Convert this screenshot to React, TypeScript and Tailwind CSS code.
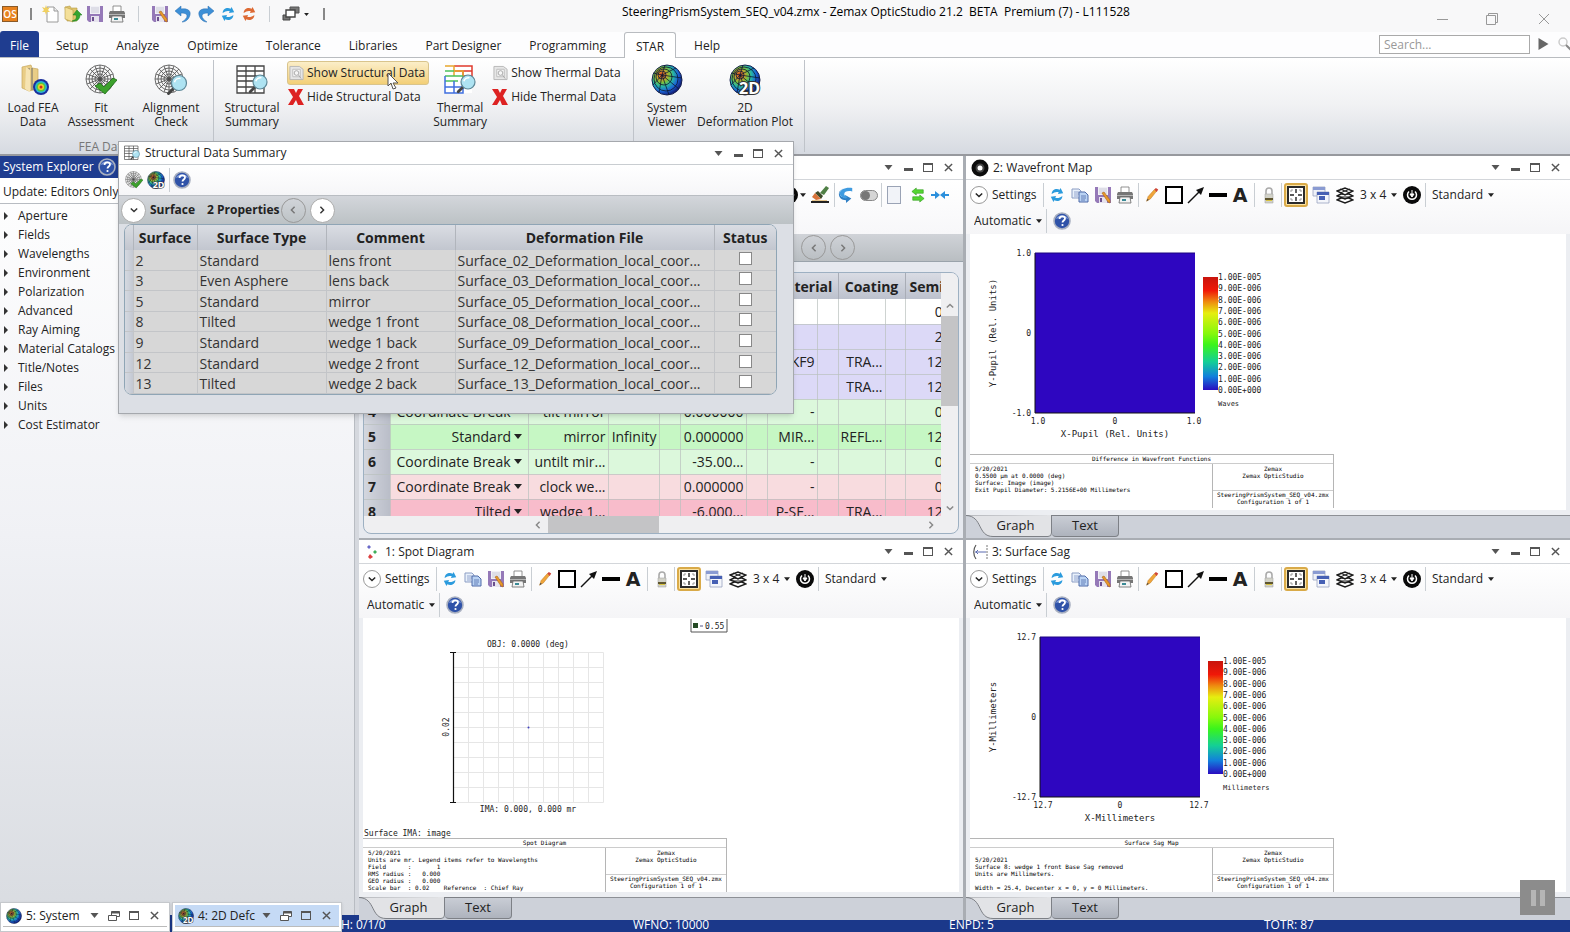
import React from 'react';

type IconProps = { className?: string };

/* ---------- small icons ---------- */

const Caret: React.FC<IconProps> = ({ className = 'w-[7px] h-1' }) => (
  <svg viewBox="0 0 8 5" className={className} fill="currentColor"><path d="M0 0h8L4 5z" /></svg>
);

const NewDocIcon = () => (
  <svg viewBox="0 0 18 18" className="w-[18px] h-[18px]">
    <path d="M5 2h7l4 4v11H5z" fill="#fff" stroke="#9a9a9a" />
    <path d="M12 2v4h4" fill="#eee" stroke="#9a9a9a" />
    <path d="M4 0l1 3 3-1-2 3 2 2-3 0-1 3-1-3-3 0 2-2-2-3 3 1z" fill="#f0d060" />
  </svg>
);

const OpenIcon = () => (
  <svg viewBox="0 0 18 18" className="w-[18px] h-[18px]">
    <path d="M1 2l5-1 1 2h6v13H3z" fill="#dfc56c" stroke="#b79a45" strokeWidth=".6" />
    <path d="M1 2l8 3v12l-8-3z" fill="#f4e09a" stroke="#b79a45" strokeWidth=".6" />
    <path d="M8 16c4-1 5-3 4-6H9l4-5 5 5h-2c0 4-3 7-8 6z" fill="#35a52f" stroke="#1c7a1b" strokeWidth=".5" />
  </svg>
);

const SaveIcon: React.FC<{ edit?: boolean }> = ({ edit }) => (
  <svg viewBox="0 0 18 18" className="w-[18px] h-[18px]">
    <path d="M1 1h16v16H3l-2-2z" fill="#9579b8" />
    <path d="M4 1h10v8H4z" fill="#f1f1f6" />
    <path d="M5 3h8M5 5h8M5 7h8" stroke="#c3c3d2" strokeWidth=".8" />
    <path d="M5 11h8v6H5z" fill="#e6e3ee" />
    <path d="M6 12h2v4H6z" fill="#6b4f8d" />
    {edit && <path d="M8 7l2-1 6 8v3l-2-1z" fill="#e8982a" stroke="#a8631a" strokeWidth=".6" />}
  </svg>
);

const PrintIcon = () => (
  <svg viewBox="0 0 18 18" className="w-[18px] h-[18px]">
    <path d="M5 1h8v6H5z" fill="#fff" stroke="#777" strokeWidth=".8" />
    <path d="M2 6h14l1 2v5H1V8z" fill="#767676" />
    <path d="M1 9h16v1H1z" fill="#b5b5b5" />
    <path d="M4 11h10l1 6H3z" fill="#f3f3f3" stroke="#666" strokeWidth=".8" />
    <path d="M6 13h4v2H6z" fill="#3a8a96" />
  </svg>
);

const UndoIcon: React.FC<IconProps> = ({ className = '' }) => (
  <svg viewBox="0 0 18 18" className={`w-[18px] h-[18px] ${className}`}>
    <path d="M1 6l6-5v3c7-1 10 2 9 6-1 4-4 7-8 7 3-2 5-4 5-6 0-2-2-3-6-3v3z" fill="#3d8fd6" stroke="#2a6fb0" strokeWidth=".5" />
  </svg>
);

const RefreshIcon: React.FC<IconProps> = ({ className = 'text-[#2b9bdd]' }) => (
  <svg viewBox="0 0 18 18" className={`w-4 h-[18px] ${className}`} fill="currentColor">
    <path d="M3 8c0-5 5-7 9-5l1-2 3 6-6 1 1-2c-3-1-5 0-8 2z" />
    <path d="M15 10c0 5-5 7-9 5l-1 2-3-6 6-1-1 2c3 1 5 0 8-2z" />
  </svg>
);

const CascadeIcon = () => (
  <svg viewBox="0 0 18 16" className="w-[18px] h-4">
    <path d="M8 1h9v6H8z" fill="#777" stroke="#555" />
    <path d="M1 9h7v5H1z" fill="#777" stroke="#444" />
    <path d="M4 4h9v7H4z" fill="#fff" stroke="#444" strokeWidth="1.4" />
  </svg>
);

const CopyIcon = () => (
  <svg viewBox="0 0 18 18" className="w-[18px] h-[18px]">
    <path d="M1 3h7l2 2v7H1z" fill="#e8f0fb" stroke="#8b9dc4" />
    <path d="M3 6h5M3 8h5M3 10h4" stroke="#7d93c4" strokeWidth=".8" />
    <path d="M8 6h6l3 3v7H8z" fill="#b9d2f3" stroke="#4e6aa8" />
    <path d="M10 10h5M10 12h5M10 14h4" stroke="#4e6aa8" strokeWidth=".8" />
  </svg>
);

const PencilIcon = () => (
  <svg viewBox="0 0 18 18" className="w-3.5 h-4">
    <path d="M2 17l2-6 8-9 3 2-8 10z" fill="#f0a53a" stroke="#b87822" strokeWidth=".6" />
    <path d="M12 2l2-2 3 2-2 3z" fill="#cf4538" />
    <path d="M2 17l1-3 2 1z" fill="#444" />
  </svg>
);

const ArrowLineIcon = () => (
  <svg viewBox="0 0 18 18" className="w-[18px] h-[18px]">
    <path d="M1 17L12 6" stroke="#111" strokeWidth="1.5" />
    <path d="M17 1l-3 8-5-5z" fill="#111" />
  </svg>
);

const LockIcon = () => (
  <svg viewBox="0 0 12 18" className="w-3 h-[18px]">
    <path d="M3 9V5c0-4 6-4 6 0v4" fill="none" stroke="#aaa" strokeWidth="1.6" />
    <path d="M2 8h8v9H2z" fill="#d2d2c8" stroke="#aaa" strokeWidth=".6" />
    <path d="M2 12h8v2H2z" fill="#5f5630" />
    <path d="M3 14h6v1H3z" fill="#d8c23e" />
  </svg>
);

const FitFrameIcon = () => (
  <svg viewBox="0 0 18 18" className="w-[18px] h-[18px] shrink-0">
    <path d="M1 1h16v16H1z" fill="#fff" stroke="#2a2a2a" strokeWidth="2" />
    <path d="M9 3v4M9 11v4M3 9h4M11 9h4" stroke="#222" strokeWidth="1.4" />
    <path d="M4 6V4h2M12 4h2v2M4 12v2h2M14 12v2h-2" fill="none" stroke="#999" />
  </svg>
);

const WindowsIcon = () => (
  <svg viewBox="0 0 18 18" className="w-[18px] h-[18px]">
    <path d="M1 1h12v9H1z" fill="#eef1f8" stroke="#9aa3c0" strokeWidth=".8" />
    <path d="M1 1h12v3H1z" fill="#8a9bd2" />
    <path d="M5 6h12v11H5z" fill="#f4f6fb" stroke="#9aa3c0" strokeWidth=".8" />
    <path d="M5 6h12v3H5zM7 10h6v4H7z" fill="#4660b4" />
  </svg>
);

const LayersIcon = () => (
  <svg viewBox="0 0 18 18" className="w-[18px] h-[18px]" fill="#fff" stroke="#1a1a1a" strokeWidth="1.4">
    <path d="M1 14l4-2h8l4 2-8 3z" />
    <path d="M1 10l4-2h8l4 2-8 3z" />
    <path d="M1 5l8-3 8 3-8 4z" />
    <path d="M4 7l10-4M4 3l10 4M4 11h10" strokeWidth="1" />
  </svg>
);

const TargetIcon = () => (
  <svg viewBox="0 0 18 18" className="w-[18px] h-[18px]">
    <circle cx="9" cy="9" r="9" fill="#0a0a0a" />
    <path d="M6 5.500a4.500 4.500 0 1 0 6 0" fill="none" stroke="#fff" strokeWidth="1.500" />
    <path d="M9 4v5M7 8l2 3 2-3z" stroke="#fff" fill="#fff" />
  </svg>
);

const HelpIcon = () => (
  <svg viewBox="0 0 18 18" className="w-[18px] h-[18px]">
    <circle cx="9" cy="9" r="8" fill="#2f52a8" stroke="#a9b0c0" strokeWidth="1.6" />
    <path d="M3 7c1-5 11-5 12 0-4-2-8-2-12 0z" fill="#7f9ad8" />
    <path d="M6.500 7c0-3.500 5.500-3.500 5.500-.5 0 2-2.500 2-2.500 4" fill="none" stroke="#fff" strokeWidth="1.8" />
    <circle cx="9.500" cy="13" r="1.100" fill="#fff" />
  </svg>
);

const Magnifier: React.FC<{ x: number; y: number; r: number }> = ({ x, y, r }) => (
  <g>
    <path d={`M${x - r * 0.6} ${y + r * 0.6}l${-r * 0.8} ${r * 0.8}`} stroke="#444" strokeWidth={r * 0.4} strokeLinecap="round" />
    <circle cx={x} cy={y} r={r} fill="#aee3f2" stroke="#5d8797" strokeWidth="1.2" />
    <path d={`M${x - r * 0.6} ${y - r * 0.1}a${r * 0.7} ${r * 0.7} 0 0 1 ${r * 0.8} ${-r * 0.5}`} fill="none" stroke="#fff" strokeWidth="1.500" />
  </g>
);

const WebRings = () => (
  <g fill="#f7f7f7" stroke="#4a4a4a" strokeWidth=".8">
    <circle cx="15" cy="15" r="14" />
    <circle cx="15" cy="15" r="11" />
    <circle cx="15" cy="15" r="8" />
    <circle cx="15" cy="15" r="5" />
    <circle cx="15" cy="15" r="2" />
    <path d="M15 1v28M1 15h28M5 5l20 20M25 5L5 25M10 2l10 26M20 2L10 28M2 10l26 10M2 20l26-10" />
  </g>
);

const LoadFeaIcon = () => (
  <svg viewBox="0 0 32 32" className="w-8 h-8">
    <path d="M5 3l9-2 1 3 6 1v20l-9 2-7-3z" fill="#e9cd86" stroke="#c7a75c" strokeWidth=".7" />
    <path d="M12 4v23M15 4v22" stroke="#6a6a6a" strokeWidth="1" />
    <path d="M9 3l4 3v22l-5-3z" fill="#f6e4b3" />
    <circle cx="24" cy="23" r="8" fill="#1b2f9c" />
    <circle cx="24" cy="23" r="6" fill="#28b5d8" />
    <circle cx="24" cy="23" r="4.500" fill="#59c83c" />
    <circle cx="24" cy="23" r="3" fill="#f0d02c" />
    <circle cx="24" cy="23" r="1.500" fill="#d42a1c" />
  </svg>
);

const FitIcon: React.FC<IconProps> = ({ className = 'w-8 h-8' }) => (
  <svg viewBox="0 0 32 32" className={className}>
    <WebRings />
    <path d="M10 22l5-3 4 4 9-9 4 2-12 14z" fill="#3ca12c" stroke="#1e6a17" strokeWidth=".8" />
  </svg>
);

const AlignIcon = () => (
  <svg viewBox="0 0 34 32" className="w-[34px] h-8">
    <WebRings />
    <Magnifier x={25} y={19} r={7.5} />
  </svg>
);

const GridLens: React.FC<{ thermal?: boolean; className?: string }> = ({ thermal, className = 'w-8 h-8' }) => (
  <svg viewBox="0 0 32 32" className={className}>
    <path d="M1 2h27v27H1z" fill="#fff" />
    {thermal ? (
      <g fill="none" strokeWidth="1.500">
        <path d="M10 2h18v5H10M19 7v5h9V2" stroke="#e03a2c" />
        <path d="M1 2h9v10M10 7h9v10" stroke="#e8a72e" />
        <path d="M1 7h9M1 12h18M1 17h13" stroke="#4cc05c" />
        <path d="M1 12v17h18V17M1 23h18M10 17v12" stroke="#3f6fe0" />
      </g>
    ) : (
      <path d="M1 2h27v27H1zM1 7h27M1 12h27M1 17h27M1 23h27M10 2v27M19 2v27" fill="none" stroke="#444" strokeWidth="1.300" />
    )}
    <Magnifier x={24} y={18} r={7} />
  </svg>
);

const SheetIcon = () => (
  <svg viewBox="0 0 16 16" className="w-[15px] h-4">
    <path d="M1 1h10l4 3v11H1z" fill="#e6e6e6" stroke="#b5b5b5" />
    <path d="M4 4h8v8H4z" fill="#f6f6f6" stroke="#bdbdbd" />
    <circle cx="8" cy="8" r="2.500" fill="none" stroke="#a5a5a5" />
    <path d="M10 10l3 4" stroke="#a5a5a5" />
  </svg>
);

const RedX = () => (
  <svg viewBox="0 0 16 16" className="w-4 h-4">
    <path d="M0 0h6l2 4 2-4h5l-4 7 5 9h-6l-2-5-3 5H0l5-8z" fill="#dd2222" />
  </svg>
);

const GlobeIcon: React.FC<{ two?: boolean; className?: string }> = ({ two, className = 'w-8 h-8' }) => (
  <svg viewBox="0 0 32 32" className={className}>
    <defs>
      <radialGradient id="globe" cx=".33" cy=".33" r=".7">
        <stop offset="0" stopColor="#c0301a" />
        <stop offset=".18" stopColor="#e0912a" />
        <stop offset=".36" stopColor="#7fc03a" />
        <stop offset=".55" stopColor="#25b5a6" />
        <stop offset=".78" stopColor="#1b63d6" />
        <stop offset="1" stopColor="#12207c" />
      </radialGradient>
    </defs>
    <circle cx="16" cy="16" r="15" fill="url(#globe)" stroke="#16204e" />
    <g fill="none" stroke="#0d1b33" strokeWidth=".8">
      <circle cx="11" cy="11" r="4" />
      <circle cx="13" cy="13" r="8" />
      <circle cx="15" cy="15" r="12" />
      <path d="M11 11L2 21M11 11L8 29M11 11l7 20M11 11l17 14M11 11l20 3M11 11l14-7M11 11l3-10M11 11L2 9" />
    </g>
    {two && (
      <text x="31" y="30" textAnchor="end" fontSize="16" fontWeight="700" fill="#fff" stroke="#333" strokeWidth="2" paintOrder="stroke">2D</text>
    )}
  </svg>
);

const RingIcon = () => (
  <svg viewBox="0 0 18 18" className="w-[18px] h-[18px]">
    <circle cx="9" cy="9" r="8.500" fill="#0c0c0c" />
    <circle cx="9" cy="9" r="4.500" fill="#444" />
    <circle cx="9" cy="9" r="2.500" fill="#fff" />
  </svg>
);

const DotsIcon = () => (
  <svg viewBox="0 0 17 16" className="w-[17px] h-4">
    <path d="M5 1l2 2-2 2-2-2z" fill="#6a6ac8" />
    <path d="M11 6l2 2-2 2-2-2z" fill="#3fae5a" />
    <path d="M6 10l3 3-3 2-2-2z" fill="#dc4040" />
  </svg>
);

const SagIcon = () => (
  <svg viewBox="0 0 17 16" className="w-[17px] h-4" fill="none">
    <path d="M5 1C2 5 2 11 5 15" stroke="#555" strokeWidth="1.200" />
    <path d="M4 8h11M7 6L5 8l2 2" stroke="#5a6ab0" />
    <path d="M16 1v14" stroke="#777" strokeDasharray="2 1" />
  </svg>
);

/* ---------- shared controls ---------- */

const Sep: React.FC<IconProps> = ({ className = 'mx-[2px]' }) => (
  <span className={`w-px h-6 shrink-0 bg-[#c9ced3] ${className}`} />
);

const Drop: React.FC<{ label: string; value: string; className?: string; caret?: string }> = ({ label, value, className = '', caret = 'w-[6px] h-1' }) => (
  <span className={`relative inline-flex items-center ${className}`}>
    <select aria-label={label} className="appearance-none bg-transparent pr-2.5 outline-none">
      <option>{value}</option>
    </select>
    <Caret className={`absolute right-0 pointer-events-none ${caret}`} />
  </span>
);

const Tool: React.FC<{ label: string; className?: string; children: React.ReactNode }> = ({ label, className = 'w-[22px]', children }) => (
  <button aria-label={label} className={`h-6 shrink-0 flex items-center justify-center ${className}`}>{children}</button>
);

const WindowButtons: React.FC<{ stacked?: boolean }> = ({ stacked }) => (
  <div className="flex shrink-0 text-[#555]">
    <Tool label="Menu" className="w-5"><Caret className="w-[9px] h-[5px]" /></Tool>
    <Tool label={stacked ? 'Restore' : 'Minimize'} className="w-5">
      {stacked ? (
        <svg viewBox="0 0 12 10" className="w-3 h-2.5" fill="#fff" stroke="currentColor"><path d="M3.500.5h8v5h-8z" /><path d="M.5 4.500h8v5h-8z" /><path d="M3.500 1.500h8" strokeWidth="2" /></svg>
      ) : (
        <span className="w-[9px] h-[3px] mt-1 bg-[#555]" />
      )}
    </Tool>
    <Tool label="Maximize" className="w-5"><span className="w-2.5 h-[9px] border border-t-2 border-[#555]" /></Tool>
    <Tool label="Close" className="w-5">
      <svg viewBox="0 0 10 10" className="w-[9px] h-[9px]" stroke="currentColor" strokeWidth="1.600"><path d="M1 1l8 8M9 1L1 9" /></svg>
    </Tool>
  </div>
);

const Chevron: React.FC<{ dir: 'left' | 'right' | 'down' | 'up'; className?: string }> = ({ dir, className = 'w-2 h-2' }) => {
  const d = { left: 'M7 1L3 5l4 4', right: 'M3 1l4 4-4 4', down: 'M1 3l4 4 4-4', up: 'M1 7l4-4 4 4' }[dir];
  return <svg viewBox="0 0 10 10" className={className} fill="none" stroke="currentColor" strokeWidth="1.800"><path d={d} /></svg>;
};

/* ---------- ribbon ---------- */

const TitleBar = () => (
  <header className="h-8 pt-[3px] flex items-start bg-[#f8f8f9]">
    <div className="flex items-center h-[22px] pl-[2px]">
      <span className="w-4 h-4 flex items-center justify-center bg-[#e8821e] border border-[#8a5a28] text-white text-[10px] font-semibold">OS</span>
      <span className="w-0.5 h-3 ml-3 bg-[#888]" />
      <div className="flex gap-1 ml-2.5"><NewDocIcon /><OpenIcon /><SaveIcon /><PrintIcon /></div>
      <Sep className="mx-3 !h-4" />
      <div className="flex gap-[5px]">
        <SaveIcon edit />
        <UndoIcon />
        <UndoIcon className="-scale-x-100" />
        <RefreshIcon />
        <RefreshIcon className="text-[#dd6a34]" />
      </div>
      <Sep className="mx-3 !h-4" />
      <CascadeIcon />
      <Caret className="w-[5px] h-[3px] ml-1" />
      <span className="w-0.5 h-3 ml-3.5 bg-[#888]" />
    </div>
    <div className="flex-1 pl-2.5 text-center text-[12px] leading-[18px] text-black whitespace-pre">
      SteeringPrismSystem_SEQ_v04.zmx - Zemax OpticStudio 21.2  BETA  Premium (7) - L111528
    </div>
    <div className="flex pt-1 text-[#999]">
      <Tool label="Minimize window" className="w-[50px]"><span className="w-[11px] h-px bg-[#999]" /></Tool>
      <Tool label="Restore window" className="w-[50px]">
        <svg viewBox="0 0 12 12" className="w-3 h-3" fill="none" stroke="currentColor"><path d="M.5 2.500h9v9h-9zM2.500 2.500v-2h9v9h-2" /></svg>
      </Tool>
      <Tool label="Close window" className="w-[53px]">
        <svg viewBox="0 0 12 12" className="w-3 h-3" stroke="currentColor"><path d="M1 1l10 10M11 1L1 11" /></svg>
      </Tool>
    </div>
  </header>
);

const tabs = ['Setup', 'Analyze', 'Optimize', 'Tolerance', 'Libraries', 'Part Designer', 'Programming', 'STAR', 'Help'];

const RibbonTabs = () => (
  <nav className="h-[26px] flex items-end border-b border-[#b9bcc0] bg-[#fdfdfe] text-[12px]">
    <button className="h-[26px] w-[39px] pt-[3px] bg-[#1f3d90] text-white rounded-t-[3px]">File</button>
    <div className="flex pl-[3px]">
      {tabs.map((tab) => (
        <button
          key={tab}
          className={tab === 'STAR'
            ? 'h-[26px] -mb-px mx-1 px-[11px] pt-0.5 bg-white border border-b-0 border-[#b9bcc0] rounded-t-[3px]'
            : 'h-[25px] px-3.5 pt-[3px]'}
        >
          {tab}
        </button>
      ))}
    </div>
    <div className="ml-auto flex items-center h-[26px] gap-2">
      <input type="text" aria-label="Search" placeholder="Search..." className="w-[151px] h-[19px] px-1 bg-white border border-[#aaa] text-[12px] placeholder:text-[#999] outline-none" />
      <button aria-label="Go" className="w-3"><svg viewBox="0 0 10 12" className="w-[11px] h-3" fill="#666"><path d="M0 0l10 6-10 6z" /></svg></button>
      <button aria-label="Find" className="w-3"><svg viewBox="0 0 14 14" className="w-3.5 h-3.5" fill="none"><circle cx="5" cy="5" r="4" stroke="#ccc" strokeWidth="1.500" /><path d="M8 8l5 5" stroke="#888" strokeWidth="2" /></svg></button>
    </div>
  </nav>
);

const BigButton: React.FC<{ icon: React.ReactNode; lines: [string, string]; className: string }> = ({ icon, lines, className }) => (
  <button className={`flex flex-col items-center shrink-0 pt-1.5 h-[82px] text-[12px] leading-[14px] whitespace-nowrap ${className}`}>
    {icon}
    <span className="mt-[5px]">{lines[0]}</span>
    <span>{lines[1]}</span>
  </button>
);

const ShowHide: React.FC<{ kind: string; active?: boolean }> = ({ kind, active }) => (
  <div className="flex flex-col items-start pt-[3px] text-[12px] whitespace-nowrap">
    <button className={`h-6 pl-px pr-[3px] flex items-center gap-[3px] border rounded-[3px] ${active ? 'bg-linear-to-b from-[#fbeec8] to-[#f3cf76] border-[#d9c48c]' : 'border-transparent'}`}>
      <SheetIcon />Show {kind} Data
    </button>
    <button className="h-6 pl-px flex items-center gap-[3px]"><RedX />Hide {kind} Data</button>
  </div>
);

const Ribbon = () => (
  <section className="h-[98px] flex bg-linear-to-b from-white via-[#f0f1f3] to-[#d6dae1] border-b-2 border-[#97999e]">
    <div className="w-[214px] my-0.5 flex flex-col border-r border-[#bfc3c9]">
      <div className="flex -mt-0.5">
        <BigButton icon={<LoadFeaIcon />} lines={['Load FEA', 'Data']} className="w-[66px]" />
        <BigButton icon={<FitIcon />} lines={['Fit', 'Assessment']} className="w-[70px]" />
        <BigButton icon={<AlignIcon />} lines={['Alignment', 'Check']} className="w-[70px]" />
      </div>
      <div className="pr-1.5 text-center text-[12px] leading-[14px] text-[#777]">FEA Data</div>
    </div>
    <div className="w-[420px] my-0.5 flex border-r border-[#bfc3c9]">
      <div className="flex -mt-0.5 pl-[3px]">
        <BigButton icon={<GridLens />} lines={['Structural', 'Summary']} className="w-[70px]" />
        <ShowHide kind="Structural" active />
        <BigButton icon={<GridLens thermal />} lines={['Thermal', 'Summary']} className="w-[62px]" />
        <ShowHide kind="Thermal" />
      </div>
    </div>
    <div className="w-[171px] my-0.5 flex border-r border-[#bfc3c9]">
      <div className="flex -mt-0.5 pl-px">
        <BigButton icon={<GlobeIcon />} lines={['System', 'Viewer']} className="w-[64px]" />
        <BigButton icon={<GlobeIcon two />} lines={['2D', 'Deformation Plot']} className="w-[92px]" />
      </div>
    </div>
  </section>
);

/* ---------- system explorer ---------- */

const explorerItems = [
  'Aperture', 'Fields', 'Wavelengths', 'Environment', 'Polarization', 'Advanced',
  'Ray Aiming', 'Material Catalogs', 'Title/Notes', 'Files', 'Units', 'Cost Estimator',
];

const SystemExplorer = () => (
  <aside className="w-[355px] shrink-0 flex flex-col text-[12px] bg-linear-to-b from-white via-[#f0f1f5] to-[#d9dce1] border-r border-[#b8bcc2]">
    <div className="h-[22px] pl-[3px] flex items-center gap-1 bg-[#1f3d90] text-white">
      System Explorer <HelpIcon />
    </div>
    <div className="h-[26px] pt-0.5 pl-[3px] flex items-center bg-white border-b border-[#b8bcc2]">Update: Editors Only</div>
    <ul className="pt-0.5">
      {explorerItems.map((item) => (
        <li key={item}>
          <button className="h-[19px] pl-1 flex items-center gap-2.5">
            <svg viewBox="0 0 4 8" className="w-1 h-2" fill="#333"><path d="M0 0l4 4-4 4z" /></svg>
            {item}
          </button>
        </li>
      ))}
    </ul>
  </aside>
);

/* ---------- analysis windows ---------- */

const PanelTitle: React.FC<{ icon?: React.ReactNode; title?: string }> = ({ icon, title }) => (
  <div className="h-6 shrink-0 px-[5px] flex items-center gap-1 bg-white border-b border-[#d3d6da] text-[12px]">
    {icon}
    <span className="flex-1">{title}</span>
    <WindowButtons />
  </div>
);

const GraphToolbar = () => (
  <div className="shrink-0 h-[54px] pt-0.5 pl-1 bg-linear-to-b from-white to-[#f5f5f7] text-[12px]">
    <div className="flex items-center h-[26px]">
      <button className="w-[73px] shrink-0 flex items-center gap-1">
        <span className="w-[18px] h-[18px] flex items-center justify-center rounded-full border border-[#999] bg-white"><Chevron dir="down" /></span>
        Settings
      </button>
      <Sep className="mr-[2px]" />
      <Tool label="Refresh"><RefreshIcon /></Tool>
      <Tool label="Copy" className="w-[23px]"><CopyIcon /></Tool>
      <Tool label="Save" className="w-[23px]"><SaveIcon edit /></Tool>
      <Tool label="Print"><PrintIcon /></Tool>
      <Sep />
      <Tool label="Pencil"><PencilIcon /></Tool>
      <Tool label="Rectangle"><span className="w-[18px] h-[18px] border-2 border-black bg-white" /></Tool>
      <Tool label="Arrow"><ArrowLineIcon /></Tool>
      <Tool label="Line"><span className="w-[18px] h-1 bg-black" /></Tool>
      <Tool label="Annotate">
        <span className="font-['DejaVu_Sans'] text-[19px] leading-none font-bold">A</span>
      </Tool>
      <Sep className="mx-[3px]" />
      <Tool label="Lock"><LockIcon /></Tool>
      <Sep className="ml-px mr-[2px]" />
      <Tool label="Fit window" className="w-6 rounded-[3px] border-2 border-[#d9aa48] bg-[#fbe3a4]"><FitFrameIcon /></Tool>
      <Tool label="Cascade" className="w-[26px]"><WindowsIcon /></Tool>
      <Tool label="Layers"><LayersIcon /></Tool>
      <Drop label="Grid size" value="3 x 4" className="ml-1 mr-1" />
      <Tool label="Reset"><TargetIcon /></Tool>
      <Sep className="ml-[2px] mr-1.5" />
      <Drop label="Style" value="Standard" />
    </div>
    <div className="flex items-center h-[26px] pl-1">
      <Drop label="Mode" value="Automatic" />
      <Sep className="ml-1 mr-1" />
      <Tool label="Help"><HelpIcon /></Tool>
    </div>
  </div>
);

const PanelTabs = () => (
  <div className="h-[23px] shrink-0 flex items-start bg-[#cdd1d9] border-t border-[#8d9096] text-[13px]">
    <button className="relative w-[86px] h-[22px] -mt-px pl-[13px]">
      <svg viewBox="0 0 86 22" className="absolute inset-0 w-[86px] h-[22px]">
        <path d="M0 .5C17 1 11 21.500 27 21.500H82q3.500 0 3.500-3.500V0" fill="#e2e3e6" stroke="#7d8086" />
      </svg>
      <span className="relative">Graph</span>
    </button>
    <button className="w-[67px] h-[22px] -mt-px bg-linear-to-b from-[#c9cdd5] to-[#aeb3bd] border border-l-0 border-[#7d8086] rounded-b-[4px]">Text</button>
  </div>
);

const Footer: React.FC<{ title: string; lines: string }> = ({ title, lines }) => (
  <div className="w-[364px] h-[54px] flex flex-col border-t border-r border-[#b5b5b5] font-['DejaVu_Sans_Mono'] text-[6px] leading-[7px] text-black">
    <div className="h-[9px] text-center border-b border-[#ccc]">{title}</div>
    <div className="flex-1 flex">
      <pre className="flex-1 pt-px pl-[5px] font-['DejaVu_Sans_Mono'] leading-[7px]">{lines}</pre>
      <div className="w-[121px] shrink-0 flex flex-col border-l border-[#b5b5b5] text-center">
        <div className="h-[27px] pt-px border-b border-[#ccc]">Zemax<br />Zemax OpticStudio</div>
        <div>SteeringPrismSystem_SEQ_v04.zmx<br />Configuration 1 of 1</div>
      </div>
    </div>
  </div>
);

const GraphPanel: React.FC<{ icon: React.ReactNode; title: string; children: React.ReactNode }> = ({ icon, title, children }) => (
  <section className="min-h-0 min-w-0 flex flex-col bg-[#eceef2]">
    <PanelTitle icon={icon} title={title} />
    <GraphToolbar />
    <div className="flex-1 min-h-0 mx-1 mb-[5px] flex flex-col bg-white">{children}</div>
    <PanelTabs />
  </section>
);

const scale = ['1.00E-005', '9.00E-006', '8.00E-006', '7.00E-006', '6.00E-006', '5.00E-006', '4.00E-006', '3.00E-006', '2.00E-006', '1.00E-006', '0.00E+000'];

const FalseColorPlot: React.FC<{ id: string; left: number; max: string; axis: [string, string]; unit: string }> = ({ id, left, max, axis, unit }) => (
  <svg width="400" height="220" viewBox="0 0 400 220" className="shrink-0 font-['DejaVu_Sans_Mono']" fontSize="8" fill="#222">
    <defs>
      <linearGradient id={id} x1="0" y1="0" x2="0" y2="1">
        <stop offset="0" stopColor="#c8140c" />
        <stop offset=".12" stopColor="#f01808" />
        <stop offset=".22" stopColor="#ee8c10" />
        <stop offset=".32" stopColor="#e6ee10" />
        <stop offset=".5" stopColor="#86f80c" />
        <stop offset=".6" stopColor="#3af41c" />
        <stop offset=".75" stopColor="#14cf96" />
        <stop offset=".88" stopColor="#1280dc" />
        <stop offset="1" stopColor="#2a0cc0" />
      </linearGradient>
    </defs>
    <rect x={left} y="19" width="160" height="160" fill="#2e06c0" />
    <path d={`M${left} 19v160h160`} fill="none" stroke="#111" />
    <path d={`M${left} 19h160`} stroke="#1c0480" />
    <text x={left - 4} y="22" textAnchor="end">{max}</text>
    <text x={left - 4} y="102" textAnchor="end">0</text>
    <text x={left - 4} y="182" textAnchor="end">-{max}</text>
    <text x={left + 3} y="190" textAnchor="middle">{max}</text>
    <text x={left + 80} y="190" textAnchor="middle">0</text>
    <text x={left + 159} y="190" textAnchor="middle">{max}</text>
    <text x={left + 80} y="203" textAnchor="middle" fontSize="9">{axis[0]}</text>
    <text x="24" y="99" textAnchor="middle" fontSize="9" transform="rotate(-90 24 99)" dy="2">{axis[1]}</text>
    <rect x={left + 168} y="43" width="15" height="113" fill={`url(#${id})`} />
    {scale.map((s, i) => <text key={s} x={left + 183} y={46 + i * 11.3}>{s}</text>)}
    <text x={left + 183} y="172" fontSize="7">{unit}</text>
  </svg>
);

const SpotPlot = () => {
  const steps = Array.from({ length: 11 }, (_, i) => i * 15);
  return (
    <svg width="400" height="220" viewBox="0 0 400 220" className="shrink-0 font-['DejaVu_Sans_Mono']" fontSize="8" fill="#222">
      <path d="M328 14V1M328 14h36V1" fill="none" stroke="#555" />
      <rect x="330" y="5" width="5" height="5" fill="#244a24" />
      <path d="M337 8h3" stroke="#558" />
      <text x="342" y="11">0.55</text>
      <text x="165" y="29" textAnchor="middle">OBJ: 0.0000 (deg)</text>
      <g stroke="#e6e6e6">
        {steps.map((s) => <path key={s} d={`M${90.5 + s} 34.5v150M90.5 ${34.5 + s}h150`} />)}
      </g>
      <path d="M87 34.500h6M90.500 34v150M87 184.500h6" stroke="#111" strokeWidth="1.200" fill="none" />
      <text x="86" y="109" textAnchor="middle" transform="rotate(-90 86 109)">0.02</text>
      <circle cx="165.500" cy="109.500" r="1" fill="#4040c0" />
      <text x="165" y="194" textAnchor="middle">IMA: 0.000, 0.000 mr</text>
      <text x="1" y="218">Surface IMA: image</text>
    </svg>
  );
};

/* ---------- lens data editor ---------- */

const lensRows = [
  { n: '0', tone: 'bg-white', type: 'Standard', comment: '', radius: 'Infinity', thick: 'Infinity', mat: '', coat: '', sem: '0.000000' },
  { n: '1', tone: 'bg-[#dcd9f7]', type: 'Standard', comment: '', radius: 'Infinity', thick: '50.00...', mat: '', coat: '', sem: '2.000000' },
  { n: '2', tone: 'bg-[#dcd9f7]', type: 'Standard', comment: 'lens front', radius: '', thick: '4.000...', mat: 'N-KF9', coat: 'TRA...', sem: '12.700000' },
  { n: '3', tone: 'bg-[#dcd9f7]', type: 'Even Asphere', comment: 'lens back', radius: '', thick: '35.00...', mat: '', coat: 'TRA...', sem: '12.700000' },
  { n: '4', tone: 'bg-[#dcf8dc]', type: 'Coordinate Break', comment: 'tilt mirror', radius: '', thick: '0.000000', mat: '-', coat: '', sem: '0.000000' },
  { n: '5', tone: 'bg-[#c6f7c4]', type: 'Standard', comment: 'mirror', radius: 'Infinity', thick: '0.000000', mat: 'MIR...', coat: 'REFL...', sem: '12.700000' },
  { n: '6', tone: 'bg-[#dcf8dc]', type: 'Coordinate Break', comment: 'untilt mir...', radius: '', thick: '-35.00...', mat: '-', coat: '', sem: '0.000000' },
  { n: '7', tone: 'bg-[#f8dcdf]', type: 'Coordinate Break', comment: 'clock we...', radius: '', thick: '0.000000', mat: '-', coat: '', sem: '0.000000' },
  { n: '8', tone: 'bg-[#f8bccb]', type: 'Tilted', comment: 'wedge 1...', radius: '', thick: '-6.000...', mat: 'P-SF...', coat: 'TRA...', sem: '12.700000' },
];

const LensDataEditor = () => (
  <section className="min-h-0 min-w-0 flex flex-col bg-[#e6e9ef]">
    <PanelTitle />
    <div className="h-[54px] shrink-0 pt-[3px] pr-3 flex justify-end items-start bg-linear-to-b from-white to-[#f7f7f9]">
      <Tool label="Target"><TargetIcon /></Tool>
      <Caret className="w-1.5 h-1 mt-2.5" />
      <Tool label="Paint" className="w-7">
        <svg viewBox="0 0 18 18" className="w-[18px] h-[18px]">
          <path d="M9 7l6-7 3 2-5 7z" fill="#4f7f45" />
          <path d="M4 7l3-2 5 5-2 3z" fill="#3c4a2a" />
          <path d="M1 11l3-4 6 6-5 1z" fill="#d8733a" />
          <path d="M0 15h18v2H0z" fill="#222" />
          <path d="M1 14h15v1H1z" fill="#e6c58c" />
        </svg>
      </Tool>
      <Sep className="mx-0" />
      <Tool label="Rotate">
        <svg viewBox="0 0 18 18" className="w-4 h-[18px]">
          <path d="M16 1C7-1 1 3 2 8c1 3 3 4 6 4v-3l7 4-6 5v-3C4 15 1 12 1 8 1 3 7-1 16 1z" fill="#2f7fc4" />
          <path d="M16 1v4c-5-1-9 0-9 3 0 2 2 3 4 3l-2 2C5 12 2 10 2 7c0-4 6-7 14-6z" fill="#3f9be0" />
        </svg>
      </Tool>
      <Tool label="Toggle" className="w-6"><span className="w-[18px] h-[11px] flex rounded-full bg-[#d5d5d5] border border-[#888]"><span className="w-[9px] h-[9px] rounded-full bg-[#777]" /></span></Tool>
      <Sep className="mx-0" />
      <Tool label="Notes" className="w-6"><span className="w-3.5 h-[18px] bg-[#f1f3f8] border border-[#9aa3b5]" /></Tool>
      <Tool label="Swap" className="w-[23px]">
        <svg viewBox="0 0 16 18" className="w-3.5 h-4" fill="#55d632" stroke="#2f9c1c" strokeWidth=".7"><path d="M1 5l5-4v2h8v4H6v2zM15 13l-5-4v2H2v4h8v2z" /></svg>
      </Tool>
      <Tool label="Width">
        <svg viewBox="0 0 18 10" className="w-[18px] h-2.5" fill="#2b8fdc"><path d="M0 4h4V1l5 4-5 4V6H0zM18 4h-4V1L9 5l5 4V6h4z" /></svg>
      </Tool>
    </div>
    <div className="h-7 shrink-0 flex items-center justify-end pr-[108px] gap-1 bg-linear-to-b from-[#d0d3d8] to-[#b9bec2] border-b border-[#9aa3ab] text-[#777]">
      <button aria-label="Previous" className="w-[25px] h-[25px] flex items-center justify-center rounded-full border border-[#999]"><Chevron dir="left" /></button>
      <button aria-label="Next" className="w-[25px] h-[25px] flex items-center justify-center rounded-full border border-[#999]"><Chevron dir="right" /></button>
    </div>
    <div className="flex-1 min-h-0 mt-[10px] mx-1 mb-1 flex flex-col border border-[#9db0c2] rounded-[8px] bg-[#efeff1] overflow-hidden">
      <div className="flex-1 min-h-0 flex">
        <div className="flex-1 min-w-0 overflow-hidden text-[14px]">
          <table className="w-[633px] table-fixed border-collapse">
            <colgroup>
              <col className="w-[26px]" /><col className="w-[138px]" /><col className="w-[80px]" /><col className="w-[51px]" />
              <col className="w-[21px]" /><col className="w-[66px]" /><col className="w-[21px]" /><col className="w-[50px]" />
              <col className="w-[21px]" /><col className="w-[47px]" /><col className="w-[20px]" /><col className="w-[92px]" />
            </colgroup>
            <thead>
              <tr className="h-[26px] bg-linear-to-b from-[#d9dce4] to-[#bcc1cd] *:border-r *:border-[#a9adb6] *:pt-px *:px-0 *:pb-0 *:whitespace-nowrap">
                <th></th>
                <th>Surface Type</th>
                <th>Comment</th>
                <th colSpan={2}>Radius</th>
                <th colSpan={2}>Thickness</th>
                <th colSpan={2}>Material</th>
                <th colSpan={2}>Coating</th>
                <th className="text-left !pl-1">Semi-Diameter</th>
              </tr>
            </thead>
            <tbody>
              {lensRows.map((r) => (
                <tr key={r.n} className={`h-[25px] text-right *:border-r *:border-b *:border-[#b9c0bd]/70 *:py-0 *:px-0.5 *:whitespace-nowrap ${r.tone}`}>
                  <th className="bg-linear-to-r from-[#d3d6de] to-[#b9bdc8] text-left !pl-1">{r.n}</th>
                  <td><Drop label={`Surface ${r.n} type`} value={r.type} className="mr-1" caret="w-2 h-[5px]" /></td>
                  <td>{r.comment}</td>
                  <td>{r.radius}</td>
                  <td></td>
                  <td>{r.thick}</td>
                  <td></td>
                  <td>{r.mat}</td>
                  <td></td>
                  <td>{r.coat}</td>
                  <td></td>
                  <td>{r.sem}</td>
                </tr>
              ))}
            </tbody>
          </table>
        </div>
        <div className="w-[17px] shrink-0 flex flex-col items-center bg-[#efeff1] text-[#888]">
          <span className="h-[43px] flex items-end pb-1.5"><Chevron dir="up" /></span>
          <span className="w-full h-[90px] bg-[#c4c4c6]" />
          <span className="mt-auto pb-1"><Chevron dir="down" /></span>
        </div>
      </div>
      <div className="h-[17px] shrink-0 flex items-center pl-[170px] pr-[23px] text-[#888]">
        <Chevron dir="left" />
        <span className="w-[111px] h-[17px] ml-1.5 bg-[#c4c4c6]" />
        <span className="ml-auto"><Chevron dir="right" /></span>
      </div>
    </div>
  </section>
);

/* ---------- structural data summary ---------- */

const summaryRows = [
  ['2', 'Standard', 'lens front', 'Surface_02_Deformation_local_coor...'],
  ['3', 'Even Asphere', 'lens back', 'Surface_03_Deformation_local_coor...'],
  ['5', 'Standard', 'mirror', 'Surface_05_Deformation_local_coor...'],
  ['8', 'Tilted', 'wedge 1 front', 'Surface_08_Deformation_local_coor...'],
  ['9', 'Standard', 'wedge 1 back', 'Surface_09_Deformation_local_coor...'],
  ['12', 'Standard', 'wedge 2 front', 'Surface_12_Deformation_local_coor...'],
  ['13', 'Tilted', 'wedge 2 back', 'Surface_13_Deformation_local_coor...'],
];

const StructuralSummary = () => (
  <div role="dialog" aria-label="Structural Data Summary" className="absolute left-[118px] top-[141px] z-20 w-[676px] flex flex-col bg-[#dcdfe5] border border-[#a5a8ad] shadow-md">
    <div className="h-[23px] pl-[5px] pr-[5px] flex items-center gap-[5px] bg-white border-b border-[#c9cdd1] text-[12px]">
      <GridLens className="w-4 h-4" />
      <span className="flex-1">Structural Data Summary</span>
      <WindowButtons />
    </div>
    <div className="h-[31px] pl-1 flex items-center bg-linear-to-b from-white to-[#f6f6f8] border-b border-[#b9bdc2]">
      <Tool label="Fit assessment"><FitIcon className="w-[18px] h-[18px]" /></Tool>
      <Tool label="2D deformation plot"><GlobeIcon two className="w-[18px] h-[18px]" /></Tool>
      <Sep className="ml-0.5 mr-px" />
      <Tool label="Help"><HelpIcon /></Tool>
    </div>
    <div className="h-7 pl-0.5 flex items-center bg-linear-to-b from-[#d3d6db] to-[#bcc2c5] text-[12px] font-bold">
      <button aria-label="Collapse" className="w-[25px] h-[25px] flex items-center justify-center rounded-full bg-white border border-[#aaa] text-[#333]"><Chevron dir="down" /></button>
      <span className="ml-1">Surface</span>
      <span className="ml-3">2 Properties</span>
      <button aria-label="Previous surface" className="w-[25px] h-[25px] ml-px flex items-center justify-center rounded-full border border-[#999] text-[#777]"><Chevron dir="left" /></button>
      <button aria-label="Next surface" className="w-[25px] h-[25px] ml-1 flex items-center justify-center rounded-full bg-white border border-[#aaa] text-[#333]"><Chevron dir="right" /></button>
    </div>
    <div className="ml-[5px] mr-4 mb-[18px] h-[171px] border border-[#8fa5b5] rounded-[8px] overflow-hidden text-[14px] leading-[17px]">
      <table className="w-full h-full table-fixed border-collapse bg-[#d7d7d7]">
        <colgroup>
          <col className="w-[8px]" /><col className="w-[64px]" /><col className="w-[129px]" /><col className="w-[129px]" /><col className="w-[259px]" /><col />
        </colgroup>
        <thead>
          <tr className="h-[25px] bg-linear-to-b from-[#dadde3] to-[#c2c6cf] *:p-0 *:border-r *:border-[#b1b5bc] *:last:border-r-0">
            <th></th><th>Surface</th><th>Surface Type</th><th>Comment</th><th>Deformation File</th><th>Status</th>
          </tr>
        </thead>
        <tbody className="text-[#333]">
          {summaryRows.map((row) => (
            <tr key={row[0]} className="*:border-r *:border-b *:border-[#c3c5c8] *:pb-0 *:pt-px *:px-0.5 *:last:border-r-0 *:whitespace-nowrap">
              <td className="bg-linear-to-r from-[#d5d9e1] to-[#c3c8d2]"></td>
              {row.map((cell, i) => <td key={i}>{cell}</td>)}
              <td className="text-center leading-none">
                <input type="checkbox" aria-label={`Surface ${row[0]} status`} className="appearance-none w-[13px] h-[13px] mb-1 align-middle bg-white border border-[#888]" />
              </td>
            </tr>
          ))}
        </tbody>
      </table>
    </div>
  </div>
);

/* ---------- minimized windows and status bar ---------- */

const MiniWindow: React.FC<{ title: string; two?: boolean }> = ({ title, two }) => (
  <div className="w-[170px] h-[30px] p-0.5 pb-0 bg-white border border-[#c5c8cc] shadow">
    <div className={`h-[22px] pl-[3px] pr-[3px] flex items-center gap-1 border-b border-[#bbb] text-[12px] ${two ? 'bg-[#c5daf5]' : 'bg-white'}`}>
      <GlobeIcon two={two} className="w-4 h-4 shrink-0" />
      <span className="flex-1 min-w-0 whitespace-nowrap">{title}</span>
      <WindowButtons stacked />
    </div>
  </div>
);

const StatusBar = () => (
  <footer className="relative h-[17px] shrink-0 grid grid-cols-[633px_316px_315px_1fr] bg-[#1b388a] text-white text-[12px] leading-[19px]">
    <span className="pl-[341px]">H: 0/1/0</span>
    <span>WFNO: 10000</span>
    <span>ENPD: 5</span>
    <span>TOTR: 87</span>
  </footer>
);

const App = () => (
  <div className="relative h-screen flex flex-col overflow-hidden bg-white font-['Open_Sans',sans-serif] text-[#222]">
    <TitleBar />
    <RibbonTabs />
    <Ribbon />
    <main className="flex-1 min-h-0 flex bg-[#d5d8de]">
      <SystemExplorer />
      <div className="relative z-10 flex-1 min-w-0 -mb-[5px] ml-1 grid grid-cols-2 grid-rows-[382px_1fr] gap-x-[3px] gap-y-[2px] bg-[#a9adb3]">
        <LensDataEditor />
        <GraphPanel icon={<RingIcon />} title="2: Wavefront Map">
          <FalseColorPlot id="waves" left={65} max="1.0" axis={['X-Pupil (Rel. Units)', 'Y-Pupil (Rel. Units)']} unit="Waves" />
          <Footer
            title="Difference in Wavefront Functions"
            lines={'5/20/2021\n0.5500 µm at 0.0000 (deg)\nSurface: Image (image)\nExit Pupil Diameter: 5.2156E+00 Millimeters'}
          />
        </GraphPanel>
        <GraphPanel icon={<DotsIcon />} title="1: Spot Diagram">
          <SpotPlot />
          <Footer
            title="Spot Diagram"
            lines={'5/20/2021\nUnits are mr. Legend items refer to Wavelengths\nField      :       1\nRMS radius :   0.000\nGEO radius :   0.000\nScale bar  : 0.02    Reference  : Chief Ray'}
          />
        </GraphPanel>
        <GraphPanel icon={<SagIcon />} title="3: Surface Sag">
          <FalseColorPlot id="sag" left={70} max="12.7" axis={['X-Millimeters', 'Y-Millimeters']} unit="Millimeters" />
          <Footer
            title="Surface Sag Map"
            lines={'\n5/20/2021\nSurface 8: wedge 1 front Base Sag removed\nUnits are Millimeters.\n\nWidth = 25.4, Decenter x = 0, y = 0 Millimeters.'}
          />
        </GraphPanel>
      </div>
    </main>
    <StatusBar />

    <StructuralSummary />
    <div className="absolute bottom-0 left-0 z-20 flex gap-0.5">
      <MiniWindow title="5: System" />
      <MiniWindow title="4: 2D Defc" two />
    </div>
    <svg viewBox="0 0 12 18" className="absolute left-[387px] top-[72px] w-3 h-[18px]">
      <path d="M1 1v13l3-3 2 6 3-1-3-5h5z" fill="#fff" stroke="#555" />
    </svg>
    <button aria-label="Pause" className="absolute right-[15px] bottom-[17px] z-20 w-[35px] h-[35px] flex items-center justify-center gap-1 bg-[#8c8c8c]">
      <span className="w-[5px] h-4 bg-[#b5b5b5]" />
      <span className="w-[5px] h-4 bg-[#b5b5b5]" />
    </button>
  </div>
);

export default App;
